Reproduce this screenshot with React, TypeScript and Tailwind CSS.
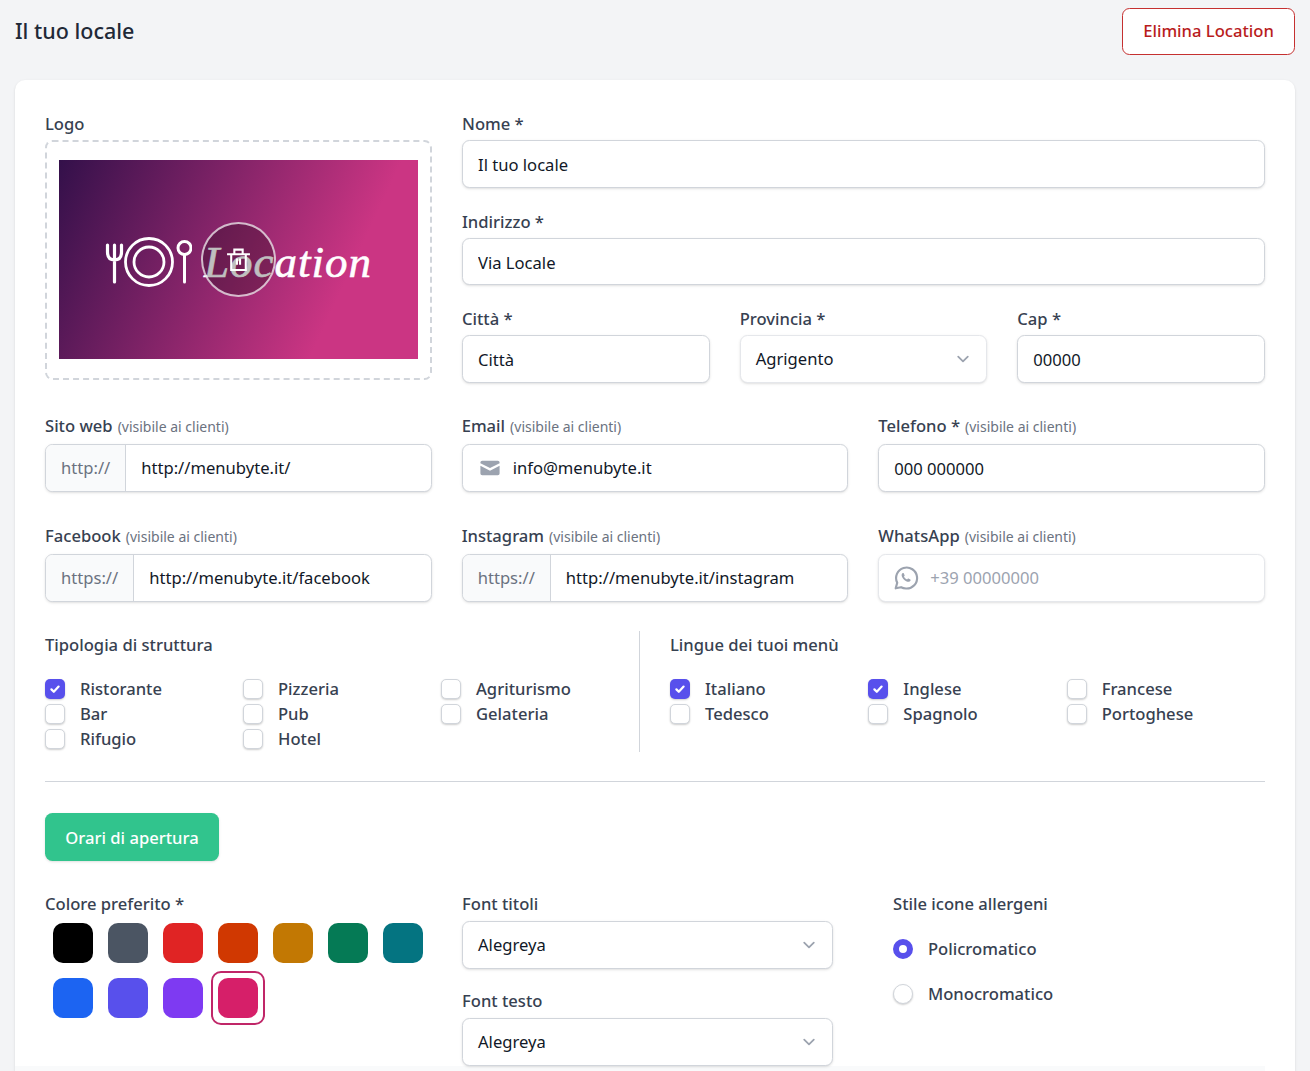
const FONT = "font-['Noto_Sans',sans-serif]";

const TIPOLOGIE = [
  { label: 'Ristorante', checked: true },
  { label: 'Pizzeria' },
  { label: 'Agriturismo' },
  { label: 'Bar' },
  { label: 'Pub' },
  { label: 'Gelateria' },
  { label: 'Rifugio' },
  { label: 'Hotel' },
];

const LINGUE = [
  { label: 'Italiano', checked: true },
  { label: 'Inglese', checked: true },
  { label: 'Francese' },
  { label: 'Tedesco' },
  { label: 'Spagnolo' },
  { label: 'Portoghese' },
];

const COLORI = [
  'bg-[#000000]',
  'bg-[#4b5563]',
  'bg-[#e02424]',
  'bg-[#d03801]',
  'bg-[#c27803]',
  'bg-[#057a55]',
  'bg-[#047481]',
  'bg-[#1c64f2]',
  'bg-[#5850ec]',
  'bg-[#7e3af2]',
  'bg-[#d61f69]',
];

function Label({ text, hint }: { text: string; hint?: boolean }) {
  return (
    <div className={`${hint ? 'h-[32.5px]' : 'h-[30px]'} pt-[1px] flex items-baseline text-[16.6px] leading-[25px] text-[#374151]`}>
      <span className="font-medium">{text}</span>
      {hint && <span className="ml-[5px] text-[14px] font-normal text-[#6b7280]">(visibile ai clienti)</span>}
    </div>
  );
}

function TextInput({ value }: { value: string }) {
  return (
    <input
      readOnly
      value={value}
      className="block w-full h-[47.5px] px-[15px] pt-[2px] rounded-[7.5px] border border-[#d1d5db] bg-white text-[16.6px] text-[#111827] shadow-sm outline-none"
    />
  );
}

function SelectBox({ value, light }: { value: string; light?: boolean }) {
  return (
    <div className={`flex items-center justify-between h-[47.5px] pl-[15px] pr-[15px] rounded-[7.5px] border ${light ? 'border-[#e5e7eb]' : 'border-[#d1d5db]'} bg-white text-[16.6px] text-[#111827] shadow-sm`}>
      <span className="pt-[2px]">{value}</span>
      <svg viewBox="0 0 20 20" fill="none" stroke="#9ca3af" strokeWidth="2.2" strokeLinecap="round" strokeLinejoin="round" className="w-[16px] h-[16px]">
        <path d="M4 7l6 6 6-6" />
      </svg>
    </div>
  );
}

function AddonInput({ addon, value }: { addon: string; value: string }) {
  return (
    <div className="flex h-[47.5px] rounded-[7.5px] border border-[#d1d5db] bg-white shadow-sm overflow-hidden text-[16.6px]">
      <span className="flex items-center px-[15px] pt-[2px] bg-[#f9fafb] border-r border-[#d1d5db] text-[#6b7280]">{addon}</span>
      <span className="flex items-center pl-[15px] pt-[2px] text-[#111827]">{value}</span>
    </div>
  );
}

function Checkbox({ label, checked }: { label: string; checked?: boolean }) {
  return (
    <div className="flex items-center h-[25px] text-[16.6px] text-[#374151] font-medium">
      {checked ? (
        <span className="flex items-center justify-center w-[20px] h-[20px] rounded-[5px] bg-[#5850ec] shadow-[0_1px_2px_rgba(0,0,0,0.2)]">
          <svg viewBox="0 0 20 20" fill="none" stroke="white" strokeWidth="2.8" strokeLinecap="round" strokeLinejoin="round" className="w-[16px] h-[16px]">
            <path d="M5.5 10.500l3 3 6-6.500" />
          </svg>
        </span>
      ) : (
        <span className="w-[20px] h-[20px] rounded-[5px] border border-[#d1d5db] bg-white shadow-[0_1px_2px_rgba(0,0,0,0.2)]" />
      )}
      <span className="ml-[15px]">{label}</span>
    </div>
  );
}

function LogoPreview() {
  return (
    <div className="relative flex items-center justify-center w-[359px] h-[199px] mb-[1px] bg-[linear-gradient(115deg,#33104a_0%,#cb3583_76%)]">
      <svg viewBox="0 0 87 50" fill="none" stroke="white" strokeLinecap="round" className="w-[87px] h-[50px] mt-[5px]">
        <path d="M2.500 8v7c0 5 2.500 8 7 8s7-3 7-8V8M9.500 8v37" strokeWidth="3.200" />
        <circle cx="44" cy="25" r="23.500" strokeWidth="2.800" />
        <circle cx="44" cy="25" r="15" strokeWidth="2.800" />
        <circle cx="79.500" cy="11" r="6.500" strokeWidth="3" />
        <path d="M79.500 18v27" strokeWidth="3" />
      </svg>
      <span className="ml-[12px] mt-[5px] font-['Liberation_Serif',serif] italic text-[45px] leading-none tracking-[1px] text-white [-webkit-text-stroke:0.6px_white]">Location</span>
      <div className="absolute left-[142px] top-[62px] flex items-center justify-center w-[75px] h-[75px] rounded-full border-2 border-white/70 bg-black/25">
        <svg viewBox="0 0 24 24" fill="none" stroke="white" strokeWidth="2" className="w-[25px] h-[25px]">
          <path d="M1 7h22M5 7v15h14V7M8 7V2.500h8V7M10.500 11v6M13.500 11v6" />
        </svg>
      </div>
    </div>
  );
}

function RadioRow({ label, checked }: { label: string; checked?: boolean }) {
  return (
    <div className="flex items-center h-[25px] text-[16.6px] font-medium text-[#374151]">
      {checked ? (
        <span className="w-[20px] h-[20px] rounded-full border-[6px] border-[#5850ec] bg-white" />
      ) : (
        <span className="w-[20px] h-[20px] rounded-full border border-[#d1d5db] bg-white shadow-[0_1px_2px_rgba(0,0,0,0.2)]" />
      )}
      <span className="ml-[15px] pt-[2px]">{label}</span>
    </div>
  );
}

export default function App() {
  return (
    <div className={`${FONT} h-[1071px] overflow-hidden bg-[#f3f4f6]`}>
      <header className="flex items-center justify-between h-[63px] px-[15px]">
        <h1 className="text-[21.5px] font-medium text-[#1f2937]">Il tuo locale</h1>
        <button className="h-[47.5px] w-[173px] rounded-[7.5px] border border-[#c53030] bg-white text-[16.6px] font-medium text-[#b91c1c]">
          Elimina Location
        </button>
      </header>

      <main className="mt-[17px] mx-[15px] rounded-t-[10px] bg-white shadow-sm pt-[30px]">
        <div className="px-[30px]">
          <div className="grid grid-cols-[387px_1fr] gap-x-[30px]">
            <div>
              <Label text="Logo" />
              <div className="flex items-center justify-center h-[240px] rounded-[7.5px] border-2 border-dashed border-[#d1d5db]">
                <LogoPreview />
              </div>
            </div>
            <div className="flex flex-col gap-[20px]">
              <div>
                <Label text="Nome *" />
                <TextInput value="Il tuo locale" />
              </div>
              <div>
                <Label text="Indirizzo *" />
                <TextInput value="Via Locale" />
              </div>
              <div className="grid grid-cols-3 gap-x-[30px]">
                <div>
                  <Label text="Città *" />
                  <TextInput value="Città" />
                </div>
                <div>
                  <Label text="Provincia *" />
                  <SelectBox value="Agrigento" light />
                </div>
                <div>
                  <Label text="Cap *" />
                  <TextInput value="00000" />
                </div>
              </div>
            </div>
          </div>

          <div className="grid grid-cols-3 gap-x-[30px] gap-y-[30px] mt-[29px]">
            <div>
              <Label text="Sito web" hint />
              <AddonInput addon="http://" value="http://menubyte.it/" />
            </div>
            <div>
              <Label text="Email" hint />
              <div className="flex items-center h-[47.5px] px-[15px] rounded-[7.5px] border border-[#d1d5db] bg-white shadow-sm text-[16.6px] text-[#111827]">
                <svg viewBox="0 0 20 20" fill="#9ca3af" className="w-[24px] h-[24px]">
                  <path d="M2 5.500A1.500 1.500 0 013.500 4h13A1.500 1.500 0 0118 5.500v.6l-8 4-8-4v-.6z" />
                  <path d="M2 8.200V14.500A1.500 1.500 0 003.500 16h13a1.500 1.500 0 001.500-1.500V8.200l-8 4-8-4z" />
                </svg>
                <span className="ml-[11px] pt-[2px]">info@menubyte.it</span>
              </div>
            </div>
            <div>
              <Label text="Telefono *" hint />
              <TextInput value="000 000000" />
            </div>
            <div>
              <Label text="Facebook" hint />
              <AddonInput addon="https://" value="http://menubyte.it/facebook" />
            </div>
            <div>
              <Label text="Instagram" hint />
              <AddonInput addon="https://" value="http://menubyte.it/instagram" />
            </div>
            <div>
              <Label text="WhatsApp" hint />
              <div className="flex items-center h-[47.5px] px-[14px] rounded-[7.5px] border border-[#e5e7eb] bg-white shadow-sm text-[16.6px] text-[#9ca3af]">
                <svg viewBox="0 0 24 24" fill="none" stroke="#9ca3af" strokeWidth="2" strokeLinejoin="round" strokeLinecap="round" className="w-[26px] h-[26px]">
                  <path d="M2.500 21.500l1.400-5.100A9.700 9.700 0 1112 21.700a9.700 9.700 0 01-4.600-1.200l-4.900 1z" />
                  <path d="M8.700 7.600c-.9.700-1 2.200-.2 3.800 1 1.900 2.700 3.400 4.700 4 1.300.4 2.500-.1 3-1.100.2-.4.100-.7-.2-.9l-1.700-.9c-.3-.1-.5 0-.7.200l-.6.700c-1.300-.5-2.300-1.500-2.900-2.700l.5-.6c.2-.2.200-.5.100-.7l-.8-1.700c-.2-.4-.7-.4-1.200-.1z" fill="#9ca3af" stroke="none" />
                </svg>
                <span className="ml-[11px] pt-[2px]">+39 00000000</span>
              </div>
            </div>
          </div>

          <div className="grid grid-cols-[595px_1fr] mt-[29.5px] h-[120px]">
            <div className="border-r border-[#d1d5db]">
              <div className="pt-[1px] text-[16.6px] leading-[25px] font-medium text-[#374151]">Tipologia di struttura</div>
              <div className="grid grid-cols-3 mt-[19.5px]">
                {TIPOLOGIE.map((t) => (
                  <Checkbox key={t.label} label={t.label} checked={t.checked} />
                ))}
              </div>
            </div>
            <div className="pl-[30px]">
              <div className="pt-[1px] text-[16.6px] leading-[25px] font-medium text-[#374151]">Lingue dei tuoi menù</div>
              <div className="grid grid-cols-3 mt-[19.5px]">
                {LINGUE.map((l) => (
                  <Checkbox key={l.label} label={l.label} checked={l.checked} />
                ))}
              </div>
            </div>
          </div>

          <div className="mt-[30px] border-t border-[#d1d5db]" />

          <button className="block mt-[31px] h-[47.5px] w-[174px] pt-[3px] rounded-[7.5px] bg-[#31c48d] text-[16.6px] font-medium text-white shadow-sm">
            Orari di apertura
          </button>

          <div className="grid grid-cols-[387px_371px_1fr] gap-x-[30px] mt-[29.5px]">
            <div>
              <Label text="Colore preferito *" />
              <div className="grid grid-cols-[repeat(7,40px)] gap-[15px] mt-[3px] ml-[8px]">
                {COLORI.map((c, i) => (
                  <div key={c} className={`relative w-[40px] h-[40px] rounded-[10px] ${c}`}>
                    {i === COLORI.length - 1 && (
                      <div className="absolute -inset-[7px] rounded-[10px] border-2 border-[#c02668]" />
                    )}
                  </div>
                ))}
              </div>
            </div>
            <div className="flex flex-col gap-[18.5px]">
              <div>
                <Label text="Font titoli" />
                <div className="mt-[1px]">
                  <SelectBox value="Alegreya" />
                </div>
              </div>
              <div>
                <Label text="Font testo" />
                <div className="mt-[1px]">
                  <SelectBox value="Alegreya" />
                </div>
              </div>
            </div>
            <div className="pl-[30px]">
              <Label text="Stile icone allergeni" />
              <div className="mt-[16px]">
                <RadioRow label="Policromatico" checked />
              </div>
              <div className="mt-[20px]">
                <RadioRow label="Monocromatico" />
              </div>
            </div>
          </div>
        </div>
        <div className="h-[40px] mr-[30px] bg-[#f9fafb]" />
      </main>
    </div>
  );
}
